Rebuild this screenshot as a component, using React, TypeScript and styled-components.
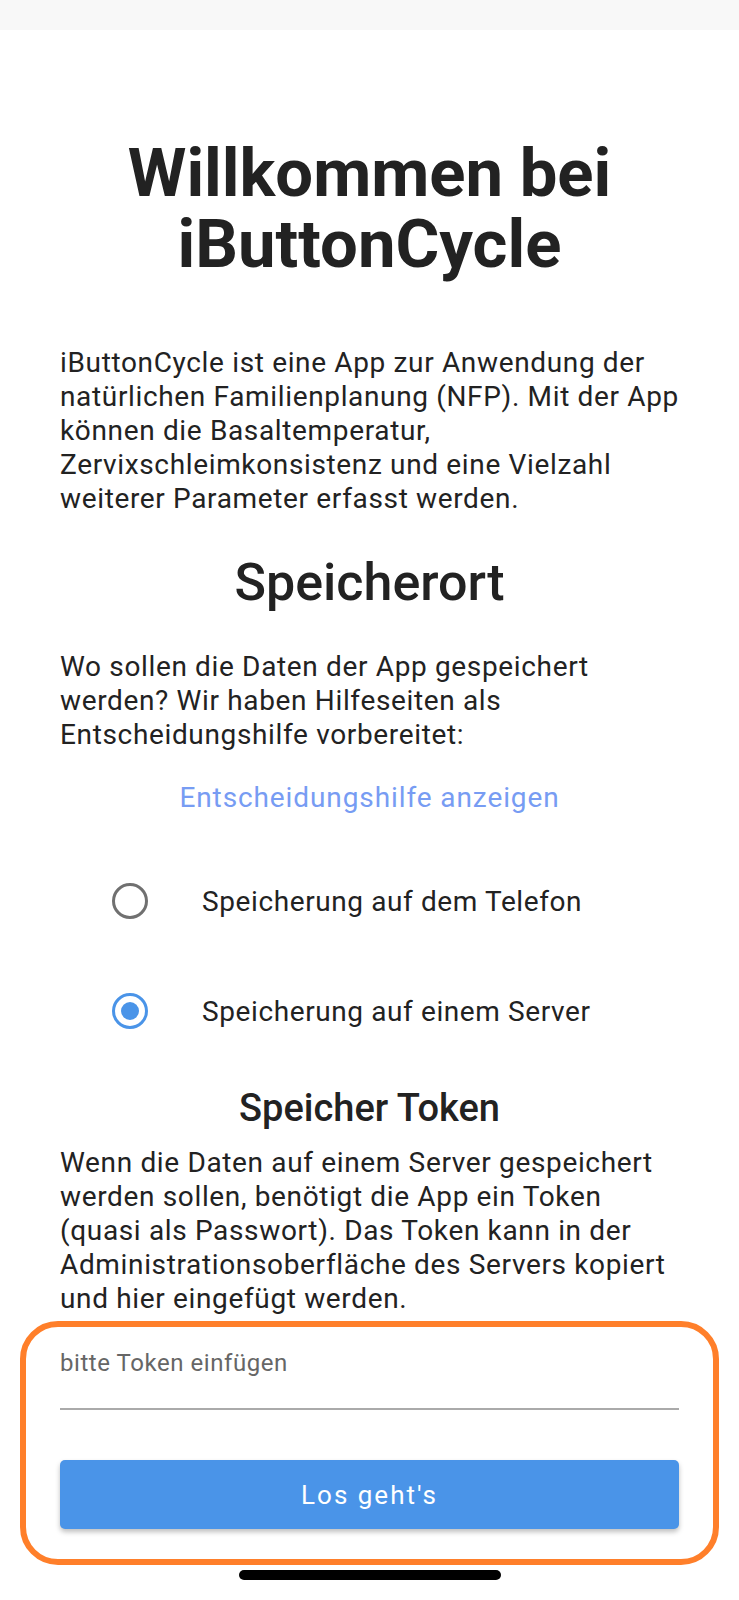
import styled, { createGlobalStyle } from "styled-components";

const GlobalStyle = createGlobalStyle`
  body {
    margin: 0;
    background: #ffffff;
    font-family: Roboto, "Noto Sans", sans-serif;
    color: #222222;
  }
`;

const Screen = styled.div`
  width: 739px;
  min-height: 1600px;
  display: flex;
  flex-direction: column;
  background: #ffffff;
`;

const StatusBar = styled.div`
  height: 30px;
  background: #f8f8f8;
`;

const Content = styled.div`
  display: flex;
  flex-direction: column;
  padding: 0 60px;
`;

const Title = styled.h1`
  margin: 108px 0 0;
  display: flex;
  flex-direction: column;
  align-items: center;
  font-size: 67px;
  font-weight: 700;
  color: #222222;
`;

const TitleLine = styled.span`
  display: block;
  height: 71px;
  line-height: 71px;
  overflow: visible;
`;

// body copy runs a little past the column edge, as in the app
const Text = styled.p<{ $top: number }>`
  margin: ${(p) => p.$top}px -6px 0 0;
  font-size: 28px;
  line-height: 34px;
  letter-spacing: 0.65px;
  color: #222222;
`;

const Heading = styled.h2<{ $size: number; $top: number }>`
  margin: ${(p) => p.$top}px 0 0;
  font-size: ${(p) => p.$size}px;
  line-height: ${(p) => Math.round(p.$size * 1.16)}px;
  font-weight: 500;
  text-align: center;
  color: #222222;
`;

const LinkButton = styled.button`
  margin: 29px auto 0;
  padding: 0;
  border: none;
  background: none;
  font-family: inherit;
  font-size: 28px;
  line-height: 34px;
  letter-spacing: 0.9px;
  color: #779cf3;
  cursor: pointer;
`;

const RadioGroup = styled.div`
  display: flex;
  flex-direction: column;
  gap: 54px;
  margin-top: 58px;
  padding-left: 52px;
`;

const RadioRow = styled.label`
  display: flex;
  align-items: center;
  gap: 54px;
  height: 56px;
  font-size: 28px;
  letter-spacing: 0.6px;
  color: #222222;
  cursor: pointer;
`;

const RadioCircle = styled.span<{ $checked: boolean }>`
  box-sizing: border-box;
  width: 36px;
  height: 36px;
  border-radius: 50%;
  border: 3.5px solid ${(p) => (p.$checked ? "#4a94e8" : "#707070")};
  display: flex;
  align-items: center;
  justify-content: center;

  &::after {
    content: "";
    width: 18px;
    height: 18px;
    border-radius: 50%;
    background: ${(p) => (p.$checked ? "#4a94e8" : "transparent")};
  }
`;

const Frame = styled.div`
  margin: 5px 20px 0;
  border: 6px solid #ff7f2a;
  border-radius: 38px;
  padding: 0 34px 30px;
  display: flex;
  flex-direction: column;
`;

const TokenInput = styled.input`
  box-sizing: border-box;
  height: 83px;
  padding: 0 0 9px;
  border: none;
  border-bottom: 2px solid #aaaaaa;
  font-family: inherit;
  font-size: 24px;
  letter-spacing: 0.55px;
  color: #222222;
  outline: none;
  background: transparent;

  &::placeholder {
    color: #666666;
  }
`;

const PrimaryButton = styled.button`
  margin-top: 50px;
  height: 69px;
  border: none;
  border-radius: 5px;
  background: #4a94e8;
  color: #ffffff;
  font-family: inherit;
  font-size: 26px;
  letter-spacing: 2px;
  box-shadow: 0 3px 5px rgba(0, 0, 0, 0.25);
  cursor: pointer;
`;

const HomeIndicator = styled.div`
  width: 262px;
  height: 10px;
  margin: 5px auto 0;
  border-radius: 5px;
  background: #000000;
`;

const options = [
  { label: "Speicherung auf dem Telefon", checked: false },
  { label: "Speicherung auf einem Server", checked: true },
];

export default function App() {
  return (
    <Screen>
      <GlobalStyle />
      <StatusBar />
      <Content>
        <Title>
          <TitleLine>Willkommen bei</TitleLine>
          <TitleLine>iButtonCycle</TitleLine>
        </Title>
        <Text $top={66}>
          iButtonCycle ist eine App zur Anwendung der natürlichen
          Familienplanung (NFP). Mit der App können die Basaltemperatur,
          Zervixschleimkonsistenz und eine Vielzahl weiterer Parameter erfasst
          werden.
        </Text>
        <Heading $size={52} $top={37}>
          Speicherort
        </Heading>
        <Text $top={37}>
          Wo sollen die Daten der App gespeichert werden? Wir haben
          Hilfeseiten als Entscheidungshilfe vorbereitet:
        </Text>
        <LinkButton>Entscheidungshilfe anzeigen</LinkButton>
        <RadioGroup>
          {options.map((o) => (
            <RadioRow key={o.label}>
              <RadioCircle $checked={o.checked} />
              {o.label}
            </RadioRow>
          ))}
        </RadioGroup>
        <Heading $size={38} $top={47}>
          Speicher Token
        </Heading>
        <Text $top={16}>
          Wenn die Daten auf einem Server gespeichert werden sollen, benötigt
          die App ein Token (quasi als Passwort). Das Token kann in der
          Administrationsoberfläche des Servers kopiert und hier eingefügt
          werden.
        </Text>
      </Content>
      <Frame>
        <TokenInput placeholder="bitte Token einfügen" />
        <PrimaryButton>Los geht's</PrimaryButton>
      </Frame>
      <HomeIndicator />
    </Screen>
  );
}
